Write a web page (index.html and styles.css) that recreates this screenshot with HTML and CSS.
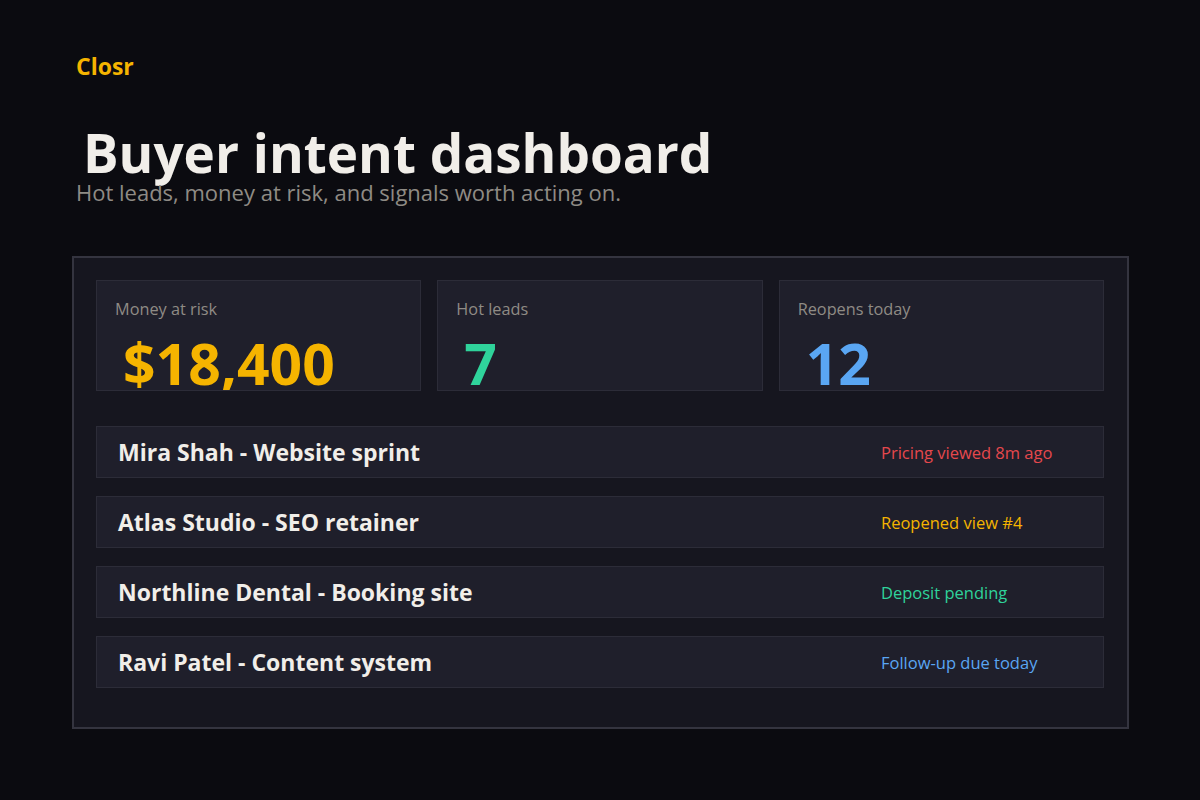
FILE: index.html
```html
<!DOCTYPE html>
<html lang="en">
<head>
<meta charset="utf-8">
<title>Closr - Buyer intent dashboard</title>
<link rel="stylesheet" href="styles.css">
</head>
<body>
<div class="page">
  <header class="header">
    <div class="brand">Closr</div>
    <h1 class="title">Buyer intent dashboard</h1>
    <p class="subtitle">Hot leads, money at risk, and signals worth acting on.</p>
  </header>
  <section class="panel">
    <div class="stats">
      <div class="stat">
        <div class="stat-label">Money at risk</div>
        <div class="stat-value yellow">$18,400</div>
      </div>
      <div class="stat">
        <div class="stat-label">Hot leads</div>
        <div class="stat-value green">7</div>
      </div>
      <div class="stat">
        <div class="stat-label">Reopens today</div>
        <div class="stat-value blue">12</div>
      </div>
    </div>
    <div class="rows">
      <div class="row">
        <div class="row-title">Mira Shah - Website sprint</div>
        <div class="row-signal red">Pricing viewed 8m ago</div>
      </div>
      <div class="row">
        <div class="row-title">Atlas Studio - SEO retainer</div>
        <div class="row-signal yellow">Reopened view #4</div>
      </div>
      <div class="row">
        <div class="row-title">Northline Dental - Booking site</div>
        <div class="row-signal green">Deposit pending</div>
      </div>
      <div class="row">
        <div class="row-title">Ravi Patel - Content system</div>
        <div class="row-signal blue">Follow-up due today</div>
      </div>
    </div>
  </section>
</div>
</body>
</html>
```

FILE: styles.css
```css
* { box-sizing: border-box; }

html, body {
  margin: 0;
  background: #0b0b10;
}

body {
  font-family: "Open Sans", "Noto Sans", sans-serif;
  color: #f1eee9;
  width: 1200px;
  height: 800px;
  overflow: hidden;
}

.page {
  padding: 51px 71px 0 72px;
}

.header {
  padding-left: 4px;
}

.brand {
  color: #f5b400;
  font-weight: 700;
  font-size: 23px;
  line-height: 30px;
}

.title {
  margin: 42px 0 0 7px;
  font-size: 53px;
  font-weight: 700;
  line-height: 60px;
  color: #f1eee9;
}

.subtitle {
  margin: -5px 0 0 0;
  font-size: 22px;
  line-height: 28px;
  color: #8f8b85;
}

.panel {
  margin-top: 50px;
  border: 2px solid #34343f;
  background: #16161f;
  padding: 22px 23px 39px 22px;
}

.stats {
  display: grid;
  grid-template-columns: repeat(3, 1fr);
  gap: 16px;
}

.stat {
  height: 111px;
  overflow: hidden;
  background: #1f1f2b;
  border: 1px solid #2c2c38;
  padding: 17px 18px 0 18px;
}

.stat-label {
  font-size: 16.3px;
  line-height: 22px;
  color: #8f8b85;
}

.stat-value {
  margin: 11px 0 0 8px;
  font-size: 57px;
  font-weight: 700;
  line-height: 64px;
}

.rows {
  margin-top: 35px;
  display: flex;
  flex-direction: column;
  gap: 18px;
}

.row {
  height: 52px;
  display: grid;
  grid-template-columns: 1fr 200px;
  align-items: center;
  padding: 0 22px 0 21px;
  background: #1f1f2b;
  border: 1px solid #2c2c38;
}

.row-title {
  font-size: 23px;
  font-weight: 700;
  color: #f1eee9;
}

.row-signal {
  font-size: 16.5px;
}

.yellow { color: #f5b400; }
.green { color: #2fd39b; }
.blue { color: #5aa6f3; }
.red { color: #e5484d; }
```
